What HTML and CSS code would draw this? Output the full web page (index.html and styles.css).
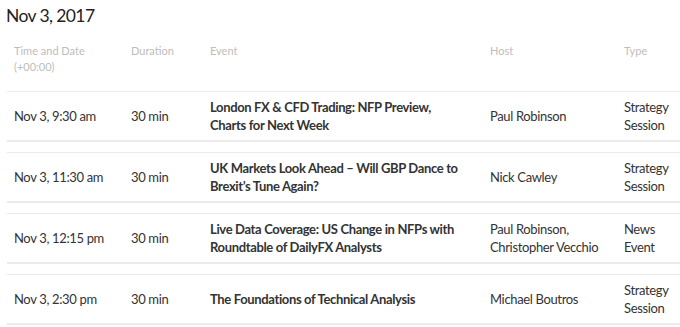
FILE: index.html
```html
<!DOCTYPE html>
<html>
<head>
<meta charset="utf-8">
<link rel="stylesheet" href="styles.css">
</head>
<body>
<div class="page">
  <h1 class="day-title">Nov 3, 2017</h1>
  <div class="schedule">
    <div class="row head">
      <div class="cell">Time and Date<br>(+00:00)</div>
      <div class="cell">Duration</div>
      <div class="cell">Event</div>
      <div class="cell">Host</div>
      <div class="cell">Type</div>
    </div>
    <div class="row item">
      <div class="cell">Nov 3, 9:30 am</div>
      <div class="cell">30 min</div>
      <div class="cell event">London FX &amp; CFD Trading: NFP Preview, Charts for Next Week</div>
      <div class="cell">Paul Robinson</div>
      <div class="cell type">Strategy Session</div>
    </div>
    <div class="row item">
      <div class="cell">Nov 3, 11:30 am</div>
      <div class="cell">30 min</div>
      <div class="cell event">UK Markets Look Ahead – Will GBP Dance to Brexit’s Tune Again?</div>
      <div class="cell">Nick Cawley</div>
      <div class="cell type">Strategy Session</div>
    </div>
    <div class="row item">
      <div class="cell">Nov 3, 12:15 pm</div>
      <div class="cell">30 min</div>
      <div class="cell event">Live Data Coverage: US Change in NFPs with Roundtable of DailyFX Analysts</div>
      <div class="cell">Paul Robinson, Christopher Vecchio</div>
      <div class="cell type">News Event</div>
    </div>
    <div class="row item">
      <div class="cell">Nov 3, 2:30 pm</div>
      <div class="cell">30 min</div>
      <div class="cell event">The Foundations of Technical Analysis</div>
      <div class="cell">Michael Boutros</div>
      <div class="cell type">Strategy Session</div>
    </div>
  </div>
</div>
</body>
</html>
```
FILE: styles.css
```css
html, body {
  margin: 0;
  padding: 0;
  background: #fff;
  overflow: hidden;
}
body {
  font-family: Lato, "Noto Sans", sans-serif;
  color: #333;
}
.page {
  padding: 5px 0 0 6px;
}
.day-title {
  margin: 0;
  font-size: 17.5px;
  letter-spacing: -0.6px;
  font-weight: 400;
  line-height: 22px;
  color: #222;
}
.schedule {
  margin: 16px 0 0 1px;
  display: flex;
  flex-direction: column;
  gap: 10px;
}
.row {
  display: grid;
  grid-template-columns: 117px 79px 280px 134px 1fr;
}
.cell {
  padding: 0 7px;
}
.head {
  font-size: 11px;
  line-height: 16px;
  color: #bdbdbd;
  padding-bottom: 16px;
  margin-bottom: -10px;
}
.item {
  border-top: 1px solid #ebebeb;
  border-bottom: 2px solid #ebebeb;
  height: 48px;
  align-items: center;
  font-size: 13px;
  letter-spacing: -0.35px;
  line-height: 18px;
}
.event {
  font-weight: 700;
  color: #333;
  padding-right: 20px;
}
.type {
  padding-right: 0;
  width: 50px;
}
```
